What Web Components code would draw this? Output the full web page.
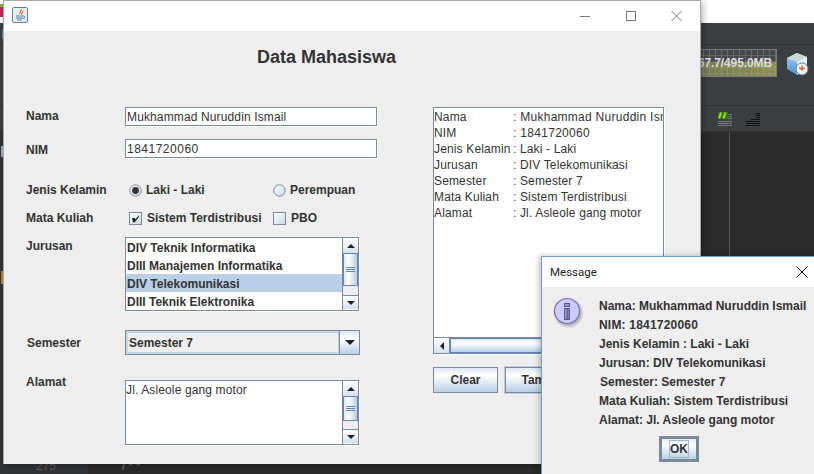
<!DOCTYPE html>
<html>
<head>
<meta charset="utf-8">
<style>
html, body { margin: 0; padding: 0; width: 814px; height: 474px; overflow: hidden; background: #2b2b2b; }
</style>
</head>
<body>
<ide-desktop>
	<app-window>
		<form-panel></form-panel>
	</app-window>
	<message-dialog></message-dialog>
</ide-desktop>

<script>
const FONT = `"Liberation Sans", Arial, sans-serif`;

// turns a template string into a custom element with an open shadow root
function defineElement(name, html, extra) {
	const tpl = document.createElement("template");
	tpl.innerHTML = html;
	customElements.define(name, class extends HTMLElement {
		constructor() {
			super();
			this.attachShadow({mode: "open"}).appendChild(tpl.content.cloneNode(true));
			if(extra) extra(this);
		}
	});
}

defineElement("ide-desktop", `<style>
:host { display: block; position: relative; width: 814px; height: 474px; overflow: hidden; font-family: ${FONT}; }
.backdrop { display: flex; flex-flow: column; height: 100%; }
.topstrip { height: 23px; background: #fff; flex: none; }
.toolbar { height: 21px; flex: none; background: #3c3f41; border-bottom: 1px solid #323232; }
.memrow { height: 61px; flex: none; background: #3c3f41; border-bottom: 1px solid #323232; display: flex; padding-top: 4px; box-sizing: border-box; }
.memory { margin-left: 660px; width: 117px; height: 28px; box-sizing: border-box; border: 1px solid #7b7d7e; overflow: hidden;
	background:
		repeating-linear-gradient(90deg, rgba(170,170,170,.35) 0 1px, transparent 1px 6px),
		repeating-linear-gradient(180deg, transparent 0 5px, rgba(170,170,170,.25) 5px 6px),
		linear-gradient(180deg, #46484a 0 12px, rgba(70,72,74,0) 12px),
		linear-gradient(90deg, #6f7052, #8f9050);
	color: #dadada; font-size: 12px; font-weight: bold; text-align: right; line-height: 26px; padding-right: 4px; letter-spacing: -.1px; white-space: nowrap; }
.cube { margin: 3px 0 0 9px; }
.toolrow { height: 26px; flex: none; background: #3c3f41; display: flex; gap: 13px; padding: 6px 0 0 718px; box-sizing: border-box; border-bottom: 1px solid #323232; }
.editor { flex: 1; background: #2b2b2b; display: flex; }
.editor-left { width: 729px; flex: none; border-right: 1px solid #555; display: flex; align-items: flex-end; }
.gutter { width: 88px; height: 100%; background: #313335; box-sizing: border-box; display: flex; align-items: flex-end; color: #606366; font-size: 12px; line-height: 13px; padding: 0 0 1px 36px; }
.code { color: #808080; font-size: 12px; line-height: 13px; padding: 0 0 1px 34px; letter-spacing: 3px; }
.strip { position: absolute; left: 0; width: 3px; }
</style>
<div class="backdrop">
	<div class="topstrip"></div>
	<div class="toolbar"></div>
	<div class="memrow">
		<div class="memory">367.7/495.0MB</div>
		<svg class="cube" width="23" height="24" viewBox="0 0 23 24">
			<defs>
				<linearGradient id="cl" x1="0" y1="0" x2="0" y2="1"><stop offset="0" stop-color="#a8d4f8"/><stop offset="1" stop-color="#4f8fd4"/></linearGradient>
				<linearGradient id="cr" x1="0" y1="0" x2="0" y2="1"><stop offset="0" stop-color="#eef5fb"/><stop offset="1" stop-color="#c8dff4"/></linearGradient>
			</defs>
			<path d="M1 6 L11 1 L21 5 L21 16 L11 23 L1 17 Z" fill="url(#cl)"/>
			<path d="M1 6 L11 1 L21 5 L11 10 Z" fill="#cbd9d2"/>
			<path d="M11 10 L21 5 L21 16 L11 23 Z" fill="url(#cr)"/>
			<circle cx="16" cy="17" r="6" fill="#f4f4f4" stroke="#5f84ab"/>
			<path d="M16 13.5 V17.5 L13 15.5 M16 17.5 L19 15.5" stroke="#e0641e" stroke-width="1.5" fill="none"/>
		</svg>
	</div>
	<div class="toolrow">
		<svg width="15" height="15" viewBox="0 0 15 15">
			<rect x="0" y="0" width="10" height="7" fill="#3f6b1f"/>
			<path d="M3 .5 L1 6.5 M7.5 .5 L5.5 6.5" stroke="#8ee81e" stroke-width="2"/>
			<path d="M10 2.5 H14 M10 4.5 H14 M10 6.5 H14 M0 9.5 H14 M0 11.5 H14 M0 13.5 H14" stroke="#77797a"/>
		</svg>
		<svg width="15" height="15" viewBox="0 0 15 15">
			<path d="M10 1.5 H14 M10 3.5 H14 M10 5.5 H14 M5 7.5 H14 M0 9.5 H14 M0 11.5 H14 M0 13.5 H14" stroke="#111"/>
		</svg>
	</div>
	<div class="editor">
		<div class="editor-left">
			<div class="gutter">275</div>
			<div class="code">/**</div>
		</div>
	</div>
</div>
<div class="strip" style="top:0;height:4px;background:#fff"></div>
<div class="strip" style="top:4px;height:3px;background:#7fae5a"></div>
<div class="strip" style="top:7px;height:10px;background:#c2285f"></div>
<div class="strip" style="top:30px;height:9px;left:2px;width:1px;background:#5f7fa8"></div>
<div class="strip" style="top:146px;height:11px;left:1px;width:2px;background:#a8b0b8"></div>
<div class="strip" style="top:271px;height:13px;left:1px;width:2px;background:#b08a4a"></div>
<slot></slot>`);

defineElement("app-window", `<style>
:host { display: flex; flex-flow: column; position: absolute; left: 3px; top: 0; width: 698px; height: 464px; box-sizing: border-box; border: 1px solid #a8a8a8; border-bottom: none; background: #eee; box-shadow: 2px 2px 7px rgba(0,0,0,.3); }
.title { height: 30px; flex: none; background: #fff; display: flex; align-items: flex-start; }
.ico { margin: 6px 0 0 8px; }
.controls { margin-left: auto; display: flex; }
.controls svg { display: block; }
</style>
<div class="title">
	<svg class="ico" width="16" height="16" viewBox="0 0 16 16">
		<rect x=".5" y=".5" width="15" height="15" rx="1.5" fill="#e8f0f6" stroke="#5b84a8"/>
		<path d="M9 2 C10 4 7 5 8 7 M11 4 C11 6 9 6 9.5 8" stroke="#e8762a" stroke-width="1.3" fill="none"/>
		<path d="M4 9 H11 M4 11 H11 M5 13 H10" stroke="#4a7ca8" stroke-width="1.1"/>
		<path d="M11 9 C13.5 9 13.5 11.5 11 11.5" stroke="#4a7ca8" fill="none"/>
	</svg>
	<div class="controls">
		<svg width="138" height="30" viewBox="0 0 138 30">
			<path d="M18 15.5 H28" stroke="#777"/>
			<rect x="64.5" y="10.5" width="9" height="9" fill="none" stroke="#777"/>
			<path d="M109.5 10 L119.5 20 M119.5 10 L109.5 20" stroke="#777"/>
		</svg>
	</div>
</div>
<slot></slot>`);

defineElement("j-label", `<style>
:host { display: block; font: bold 12px/14px ${FONT}; color: #333; white-space: nowrap; }
</style><slot></slot>`);

defineElement("j-field", `<style>
:host { display: block; box-sizing: border-box; height: 19px; width: 252px; background: #fff; border: 1px solid #7a8a99; box-shadow: 1px 1px 0 #fff; font: 12px/19px ${FONT}; color: #333; padding-left: 1px; white-space: nowrap; letter-spacing: .13px; }
</style><slot></slot>`);

defineElement("j-radio", `<style>
:host { display: flex; align-items: center; gap: 4px; font: bold 12px/14px ${FONT}; color: #333; white-space: nowrap; }
svg { display: block; flex: none; }
</style>
<svg width="13" height="13" viewBox="0 0 13 13">
	<defs><linearGradient id="g" x1="0" y1="0" x2="1" y2="1"><stop offset="0" stop-color="#fff"/><stop offset="1" stop-color="#c6d8ea"/></linearGradient></defs>
	<circle cx="6.5" cy="6.5" r="5.7" fill="url(#g)" stroke="#7a8a99"/>
	<circle id="dot" cx="6.5" cy="6.5" r="3.4" fill="#333"/>
</svg>
<slot></slot>`, el => {
	if(!el.hasAttribute("checked")) el.shadowRoot.getElementById("dot").remove();
});

defineElement("j-check", `<style>
:host { display: flex; align-items: center; gap: 5px; font: bold 12px/14px ${FONT}; color: #333; white-space: nowrap; }
svg { display: block; flex: none; }
</style>
<svg width="13" height="13" viewBox="0 0 13 13">
	<defs><linearGradient id="g" x1="0" y1="0" x2="1" y2="1"><stop offset="0" stop-color="#fff"/><stop offset="1" stop-color="#c6d8ea"/></linearGradient></defs>
	<rect x=".5" y=".5" width="12" height="12" fill="url(#g)" stroke="#7a8a99"/>
	<path id="tick" d="M3 6 L6 6 L6 7.5 L10 3.5 L10 5 L5.5 10.5 L4 10.5 Z" fill="#222"/>
</svg>
<slot></slot>`, el => {
	if(!el.hasAttribute("checked")) el.shadowRoot.getElementById("tick").remove();
});

defineElement("v-scroll", `<style>
:host { display: flex; flex-flow: column; width: 15px; flex: none; border-left: 1px solid #7a8a99; background: #eee; }
.btn { height: 15px; flex: none; display: flex; align-items: center; justify-content: center; background: linear-gradient(180deg, #fff, #e6eef6 60%, #d3e0ed); box-sizing: border-box; }
.btn.down { border-top: 1px solid #7a8a99; border-bottom: 1px solid #fff; }
.arrow-up { width: 0; height: 0; border: 4px solid transparent; border-top: none; border-bottom: 4px solid #222; }
.arrow-down { width: 0; height: 0; border: 4px solid transparent; border-bottom: none; border-top: 4px solid #222; }
.thumb { box-sizing: border-box; border: 1px solid #6382bf; background: linear-gradient(90deg, #dde8f3 0, #fff 35%, #b8cfe5 100%); display: flex; flex-flow: column; align-items: center; justify-content: center; gap: 1px; flex: none; }
.thumb i { display: block; width: 9px; height: 1px; background: #6382bf; }
.track { flex: 1; background: #eee; border-bottom: 0; }
</style>
<div class="btn up"><div class="arrow-up"></div></div>
<div class="thumb" id="thumb"><i></i><i></i><i></i></div>
<div class="track"></div>
<div class="btn down"><div class="arrow-down"></div></div>`, el => {
	el.shadowRoot.getElementById("thumb").style.height = (el.getAttribute("thumb") || 33) + "px";
});

defineElement("j-list", `<style>
:host { display: flex; box-sizing: border-box; width: 234px; height: 74px; background: #fff; border: 1px solid #7a8a99; box-shadow: 1px 1px 0 #fff; }
.items { flex: 1; overflow: hidden; }
::slotted(div) { height: 18px; font: bold 12px/20px ${FONT}; color: #333; padding-left: 1px; white-space: nowrap; }
::slotted(.sel) { background: #b8cfe5; }
</style>
<div class="items"><slot></slot></div>
<v-scroll thumb="33"></v-scroll>`);

defineElement("j-combo", `<style>
:host { display: flex; box-sizing: border-box; width: 235px; height: 25px; background: #eee; border: 1px solid #7a8a99; }
.value { flex: 1; font: bold 12px/20px ${FONT}; color: #333; padding-left: 1px; border: 2px solid #c6d6e6; border-right-width: 1px; }
.btn { width: 19px; flex: none; border-left: 1px solid #7a8a99; background: linear-gradient(180deg, #dde8f3, #fff 35%, #b8cfe5); display: flex; align-items: center; justify-content: center; }
.btn i { width: 0; height: 0; border: 5px solid transparent; border-bottom: none; border-top: 5px solid #222; }
</style>
<div class="value"><slot></slot></div>
<div class="btn"><i></i></div>`);

defineElement("j-textarea", `<style>
:host { display: flex; box-sizing: border-box; width: 234px; height: 65px; background: #fff; border: 1px solid #7a8a99; box-shadow: 1px 1px 0 #fff; }
.text { flex: 1; font: 12px/19px ${FONT}; color: #333; letter-spacing: .13px; white-space: pre; }
</style>
<div class="text"><slot></slot></div>
<v-scroll thumb="25"></v-scroll>`);

defineElement("j-button", `<style>
:host { display: flex; align-items: center; justify-content: center; box-sizing: border-box; height: 26px; width: 65px; flex: none; border: 1px solid #7a8a99; background: linear-gradient(180deg, #dde8f3, #fff 30%, #b8cfe5); font: bold 12px/14px ${FONT}; color: #333; }
:host([focused]) { box-shadow: 0 0 0 1px #b8cfe5; }
</style><slot></slot>`);

defineElement("result-box", `<style>
:host { display: flex; flex-flow: column; box-sizing: border-box; width: 231px; height: 247px; background: #fff; border: 1px solid #7a8a99; box-shadow: 1px 1px 0 #fff; overflow: hidden; }
.text { flex: 1; overflow: hidden; padding-top: 1px; }
::slotted(div) { display: grid; grid-template-columns: 79px 1fr; height: 16px; font: 12px/16px ${FONT}; color: #333; letter-spacing: .15px; white-space: nowrap; }
.hbar { height: 15px; flex: none; display: flex; border-top: 1px solid #7a8a99; background: #eee; }
.left { width: 15px; flex: none; display: flex; align-items: center; justify-content: center; background: linear-gradient(180deg, #fff, #d3e0ed); border-right: 1px solid #7a8a99; }
.left i { width: 0; height: 0; border: 4px solid transparent; border-left: none; border-right: 4px solid #222; }
.thumb { width: 200px; flex: none; box-sizing: border-box; border: 1px solid #6382bf; background: linear-gradient(180deg, #dde8f3, #fff 35%, #b8cfe5); display: flex; gap: 1px; align-items: center; justify-content: center; }
.thumb b { display: block; width: 1px; height: 9px; background: #6382bf; }
</style>
<div class="text"><slot></slot></div>
<div class="hbar"><div class="left"><i></i></div><div class="thumb"><b></b><b></b><b></b></div></div>`);

defineElement("form-panel", `<style>
:host { display: block; flex: 1; font-family: ${FONT}; }
h1 { margin: 0; padding: 16px 0 0 253px; font: bold 18px/20px ${FONT}; color: #333; height: 20px; }
.body { display: grid; grid-template-columns: 407px 231px; padding: 40px 0 0 22px; }
.left { display: flex; flex-flow: column; }
.row { display: grid; grid-template-columns: 99px 1fr; align-items: center; }
.opts { display: grid; grid-template-columns: 144px 1fr; padding-left: 4px; }
.top { align-items: start; }
.right { display: flex; flex-flow: column; }
.buttons { display: flex; gap: 7px; margin-top: 13px; }
</style>
<h1>Data Mahasiswa</h1>
<div class="body">
	<div class="left">
		<div class="row"><j-label style="margin-top:-2px">Nama</j-label><j-field>Mukhammad Nuruddin Ismail</j-field></div>
		<div class="row" style="margin-top:13px"><j-label style="margin-top:2px">NIM</j-label><j-field style="letter-spacing:.5px">1841720060</j-field></div>
		<div class="row" style="margin-top:25px"><j-label>Jenis Kelamin</j-label>
			<div class="opts"><j-radio checked>Laki - Laki</j-radio><j-radio>Perempuan</j-radio></div></div>
		<div class="row" style="margin-top:14px"><j-label>Mata Kuliah</j-label>
			<div class="opts"><j-check checked>Sistem Terdistribusi</j-check><j-check>PBO</j-check></div></div>
		<div class="row top" style="margin-top:12px"><j-label style="margin-top:2px">Jurusan</j-label>
			<j-list>
				<div>DIV Teknik Informatika</div>
				<div>DIII Manajemen Informatika</div>
				<div class="sel">DIV Telekomunikasi</div>
				<div>DIII Teknik Elektronika</div>
			</j-list></div>
		<div class="row" style="margin-top:19px"><j-label style="padding-left:1px">Semester</j-label><j-combo>Semester 7</j-combo></div>
		<div class="row top" style="margin-top:25px"><j-label style="margin-top:-5px">Alamat</j-label><j-textarea>Jl. Asleole gang motor</j-textarea></div>
	</div>
	<div class="right">
		<result-box>
			<div><span>Nama</span><span style="letter-spacing:.27px">: Mukhammad Nuruddin Ismail</span></div>
			<div><span>NIM</span><span style="letter-spacing:.3px">: 1841720060</span></div>
			<div><span>Jenis Kelamin</span><span>: Laki - Laki</span></div>
			<div><span>Jurusan</span><span>: DIV Telekomunikasi</span></div>
			<div><span>Semester</span><span>: Semester 7</span></div>
			<div><span>Mata Kuliah</span><span>: Sistem Terdistribusi</span></div>
			<div><span>Alamat</span><span>: Jl. Asleole gang motor</span></div>
		</result-box>
		<div class="buttons"><j-button>Clear</j-button><j-button focused style="width:78px">Tambah</j-button></div>
	</div>
</div>`);

defineElement("message-dialog", `<style>
:host { display: flex; flex-flow: column; position: absolute; left: 541px; top: 256px; width: 290px; height: 230px; box-sizing: border-box; border: 1px solid #6d9bd6; background: #eee; box-shadow: -2px 0 6px rgba(0,0,0,.25); font-family: ${FONT}; }
.title { height: 30px; flex: none; background: #fff; display: flex; align-items: center; padding-left: 8px; font: 11.5px Roboto, sans-serif; color: #222; }
.title svg { margin-left: 199px; }
.body { display: grid; grid-template-columns: 46px 1fr; padding: 10px 0 0 11px; }
.lines { display: flex; flex-flow: column; }
.lines j-label { height: 19px; line-height: 19px; }
.ok { box-sizing: border-box; margin: 6px 0 0 60px; width: 40px; height: 26px; border: 3px solid #7a8a99; background: linear-gradient(180deg, #dde8f3, #fff 30%, #b8cfe5); display: flex; align-items: center; justify-content: center; }
.ok span { font: bold 12px/16px ${FONT}; color: #333; border: 1px solid #a3b8cc; }
</style>
<div class="title">Message
	<svg width="12" height="12" viewBox="0 0 12 12"><path d="M.5 .5 L11.5 11.5 M11.5 .5 L.5 11.5" stroke="#111"/></svg>
</div>
<div class="body">
	<svg width="32" height="32" viewBox="0 0 32 32">
		<defs>
			<radialGradient id="s"><stop offset=".75" stop-color="#000" stop-opacity=".25"/><stop offset="1" stop-color="#000" stop-opacity="0"/></radialGradient>
		</defs>
		<circle cx="15.5" cy="16" r="15.5" fill="url(#s)"/>
		<circle cx="14" cy="14" r="12.5" fill="#ccccff" stroke="#6f6fa8" stroke-width="1.2"/>
		<rect x="11.5" y="6.5" width="5" height="3" fill="#9999cc" stroke="#5a5a90"/>
		<rect x="11.5" y="11.5" width="5" height="11" fill="#9999cc" stroke="#5a5a90"/>
		<path d="M14.5 12 V22" stroke="#66669a" stroke-width="2"/>
	</svg>
	<div class="lines">
		<j-label>Nama: Mukhammad Nuruddin Ismail</j-label>
		<j-label style="letter-spacing:.2px">NIM: 1841720060</j-label>
		<j-label>Jenis Kelamin : Laki - Laki</j-label>
		<j-label>Jurusan: DIV Telekomunikasi</j-label>
		<j-label style="padding-left:1px">Semester: Semester 7</j-label>
		<j-label>Mata Kuliah: Sistem Terdistribusi</j-label>
		<j-label>Alamat: Jl. Asleole gang motor</j-label>
		<div class="ok"><span>OK</span></div>
	</div>
</div>`);
</script>
</body>
</html>
